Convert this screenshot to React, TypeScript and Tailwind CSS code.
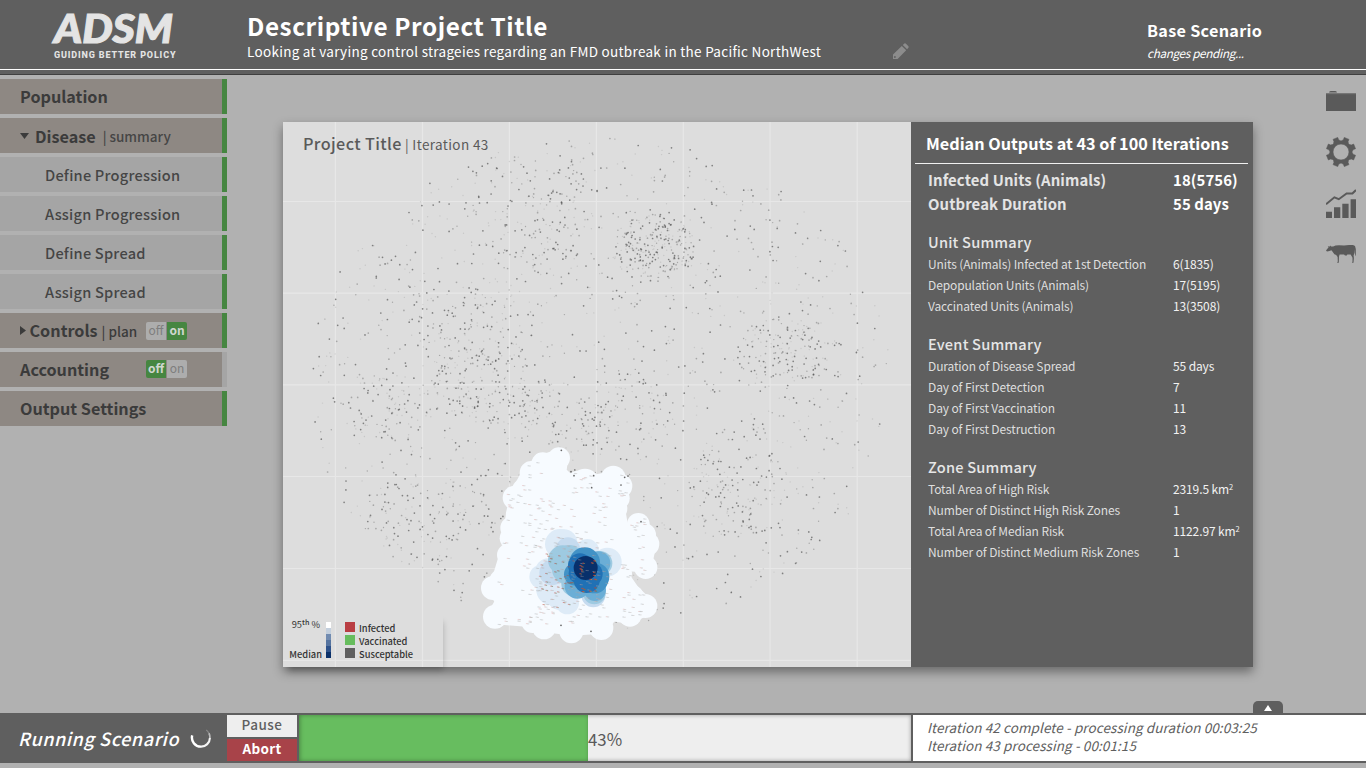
import React from "react";

function makeRandom(seed: number) {
  let s = seed;
  return () => {
    s = (s * 1664525 + 1013904223) % 4294967296;
    return s / 4294967296;
  };
}

type Dot = { x: number; y: number; r: number; o: number };

const CLUSTERS: [number, number, number, number, number][] = [
  [371, 126, 36, 30, 250],
  [500, 232, 40, 32, 140],
  [250, 85, 55, 60, 150],
  [190, 200, 60, 45, 120],
  [205, 265, 50, 32, 160],
  [105, 285, 42, 32, 90],
  [315, 290, 70, 38, 150],
  [455, 370, 45, 40, 120],
  [140, 400, 60, 40, 110],
];

function unitDots(): Dot[] {
  const rnd = makeRandom(4343);
  const out: Dot[] = [];
  const inside = (x: number, y: number) =>
    ((x - 317) / 292) ** 2 + ((y - 262) / 248) ** 2 < 1;
  const add = (x: number, y: number) => {
    const strong = rnd();
    out.push({
      x: Math.round(x * 10) / 10,
      y: Math.round(y * 10) / 10,
      r: strong > 0.45 ? 0.85 : 0.7,
      o: strong > 0.65 ? 0.7 : strong > 0.3 ? 0.4 : 0.16,
    });
  };
  let n = 0;
  while (n < 1400) {
    const x = 25 + rnd() * 584;
    const y = 14 + rnd() * 496;
    if (inside(x, y)) {
      add(x, y);
      n++;
    }
  }
  for (const [cx, cy, rx, ry, count] of CLUSTERS) {
    for (let i = 0; i < count; i++) {
      const a = rnd() * Math.PI * 2;
      const d = Math.pow(rnd(), 0.6) * 1.15;
      const x = cx + Math.cos(a) * d * rx;
      const y = cy + Math.sin(a) * d * ry;
      if (inside(x, y)) add(x, y);
    }
  }
  return out;
}

const DOTS = unitDots();

const ZONE: [number, number, number][] = [
  [267, 85, 33], [218, 101, 34], [184, 128, 35], [160, 180, 34], [134, 203, 36],
  [126, 294, 35], [115, 375, 34], [92, 452, 34], [69, 474, 36], [75, 560, 36],
  [135, 552, 34], [188, 575, 34], [222, 593, 35], [304, 604, 36], [394, 594, 36],
  [480, 555, 35], [526, 528, 36], [485, 500, 36], [450, 432, 36], [527, 412, 35],
  [532, 342, 36], [522, 315, 36], [505, 283, 34], [438, 236, 34], [450, 168, 37],
  [430, 144, 37], [345, 158, 42], [325, 160, 38], [445, 205, 34], [122, 325, 33],
];
const ZONE_CORE = "M267 85L218 101L184 128L150 190L135 250L130 294L140 350L115 375L92 452L80 474L104 515L80 556L188 565L230 580L304 590L394 584L420 545L480 555L526 528L485 490L445 432L465 396L520 400L532 342L505 305L450 305L438 236L450 168L430 150L380 160L300 165L262 130Z";

const RISK: [number, number, number, string][] = [
  [270, 342, 45, "#deebf7"], [282, 338, 40, "#deebf7"], [352, 362, 35, "#deebf7"],
  [412, 396, 43, "#deebf7"], [214, 440, 36, "#deebf7"], [245, 480, 46, "#deebf7"],
  [270, 500, 40, "#deebf7"], [292, 518, 35, "#deebf7"], [235, 425, 40, "#deebf7"],
  [294, 358, 36, "#c6dbef"], [246, 428, 38, "#c6dbef"], [370, 496, 36, "#c6dbef"],
  [278, 390, 44, "#9ecae1"], [298, 385, 40, "#9ecae1"], [290, 418, 44, "#9ecae1"],
  [390, 400, 37, "#9ecae1"], [373, 489, 34, "#9ecae1"], [310, 462, 36, "#9ecae1"],
  [322, 468, 38, "#6baed6"], [375, 480, 33, "#6baed6"], [385, 400, 36, "#6baed6"],
  [316, 433, 34, "#4292c6"], [344, 398, 46, "#4292c6"], [376, 440, 42, "#4292c6"],
  [374, 450, 40, "#4292c6"],
  [330, 406, 36, "#2171b5"], [350, 450, 39, "#2171b5"], [362, 432, 36, "#2171b5"],
  [328, 430, 32, "#2171b5"],
  [347, 414, 36, "#08306b"],
];

function RiskMap() {
  const rnd = makeRandom(77);
  const marks: React.ReactElement[] = [];
  let i = 0;
  while (marks.length < 280) {
    const x = 80 + rnd() * 440;
    const y = 95 + rnd() * 490;
    const k = rnd();
    i++;
    if (!ZONE.some(([cx, cy, r]) => (cx - x) ** 2 + (cy - y) ** 2 < (r * 0.9) ** 2) && !(x > 140 && x < 425 && y > 180 && y < 560)) continue;
    marks.push(
      <g key={i}>
        <rect x={x} y={y} width={5} height={3} fill={k > 0.6 ? "#e0a09e" : "#aab0b4"} opacity={0.42} />
        <rect x={x + 4} y={y + 1} width={6} height={2.5} fill="#a9a19a" opacity={0.42} />
      </g>,
    );
  }
  const hot: React.ReactElement[] = [];
  for (let j = 0; j < 58; j++) {
    const left = j < 38;
    const x = left ? 205 + rnd() * 105 : 328 + rnd() * 55;
    const y = left ? 370 + rnd() * 170 : 390 + rnd() * 105;
    hot.push(
      <g key={j}>
        <rect x={x} y={y} width={5} height={3} fill="#c8403a" opacity={left ? 0.5 : 0.9} />
        <rect x={x + 4} y={y + 1} width={4} height={3} fill={j % 3 ? "#6b7d55" : left ? "#a08a60" : "#d88a28"} opacity={left ? 0.6 : 0.8} />
      </g>,
    );
  }
  return (
    <svg className="block h-[545px] w-[628px]" viewBox="0 0 628 545">
      <rect width="628" height="545" fill="#dddddd" />
      <g stroke="#e7e7e7" strokeWidth="1.2">
        {[52.4, 139.5, 226.4, 313.4, 400.3, 487, 574.2].map((x) => (
          <path key={x} d={`M${x} 0V545`} />
        ))}
        {[79.5, 171.2, 262.8, 354.5, 446.5, 538.4].map((y) => (
          <path key={y} d={`M0 ${y}H628`} />
        ))}
      </g>
      <g fill="#585858">
        {DOTS.map((d, k) => (
          <circle key={k} cx={d.x} cy={d.y} r={d.r} opacity={d.o} />
        ))}
      </g>
      <g transform="translate(187 308) scale(0.33333)">
        <g fill="#f7fbff">
          <path d={ZONE_CORE} stroke="#f7fbff" strokeWidth="54" strokeLinejoin="round" />
          {ZONE.map(([x, y, r], k) => (
            <circle key={k} cx={x} cy={y} r={r} />
          ))}
        </g>
        {RISK.map(([x, y, r, c], k) => (
          <circle key={k} cx={x} cy={y} r={r} fill={c} />
        ))}
        {marks}
        {hot}
        <g fill="#666">
          {[[274, 61], [303, 125], [365, 173], [464, 142], [453, 165], [513, 275], [273, 586], [363, 604], [474, 138], [312, 137], [371, 137]].map(([x, y]) => (
            <circle key={`${x}-${y}`} cx={x} cy={y} r="2.6" />
          ))}
        </g>
      </g>
    </svg>
  );
}

function Toggle({ on }: { on: boolean }) {
  return (
    <div className="flex h-[18px] w-[41px] gap-px overflow-hidden rounded-[2px] text-[12px] leading-[16px]">
      <span className={on ? "w-5 bg-[#adadad] text-center font-normal text-[#7e7e7e]" : "w-5 bg-[#468641] text-center font-bold text-[#d0d6cf]"}>off</span>
      <span className={on ? "w-5 bg-[#468641] text-center font-bold text-[#d0d6cf]" : "w-5 bg-[#adadad] text-center font-normal text-[#7e7e7e]"}>on</span>
    </div>
  );
}

function NavRow({ children, sub, idle, plain }: { children: React.ReactNode; sub?: boolean; idle?: boolean; plain?: boolean }) {
  return (
    <div className="flex h-[35px]">
      <div
        className={
          sub
            ? "flex w-[222px] items-center bg-[#a5a5a5] pl-[45px] text-[14.6px] font-medium tracking-[0.22px] text-[#454545]"
            : plain
              ? "flex w-[222px] items-center bg-[#8e8883] pb-[2px] pl-5 text-[16.2px] font-bold text-[#3b3b3b]"
              : "flex w-[222px] items-center bg-[#8e8883] pl-5 text-[16.2px] font-bold text-[#3b3b3b]"
        }
      >
        {children}
      </div>
      <div className={idle ? "w-[5px] bg-[#a5a5a5]" : "w-[5px] bg-[#468641]"} />
    </div>
  );
}

function Row({ label, value }: { label: string; value: React.ReactNode }) {
  return (
    <div className="flex h-[21px] text-[12px] leading-[19px] tracking-[-0.12px]">
      <span className="w-[245px] text-[#dedede]">{label}</span>
      <span className="text-[#f2f2f2]">{value}</span>
    </div>
  );
}

function GroupTitle({ children }: { children: React.ReactNode }) {
  return <h3 className="mt-[18px] h-[21px] text-[14.6px] leading-[18px] font-medium tracking-[0.2px] text-[#e6e6e6]">{children}</h3>;
}

function Area({ km }: { km: string }) {
  return (
    <>
      {km} km<sup className="relative -top-[4px] align-baseline text-[7.5px] leading-none">2</sup>
    </>
  );
}

function Legend() {
  return (
    <div className="absolute bottom-0 left-0 flex h-[54px] w-[160px] text-[9.3px] text-[#333] shadow-[3px_6px_6px_-3px_rgba(0,0,0,0.22)]">
      <div className="flex w-[39px] flex-col justify-between pt-1 pb-[6px] text-right leading-[14px]">
        <span className="pr-[2px]">95<sup className="relative -top-[3px] align-baseline text-[7.2px] leading-none font-medium">th</sup> %</span>
        <span className="font-medium">Median</span>
      </div>
      <div className="mt-[9px] ml-1 flex h-9 w-[5px] flex-col">
        <i className="h-1.5 bg-white" />
        <i className="h-1.5 bg-[#c3cfdd]" />
        <i className="h-1.5 bg-[#718bb0]" />
        <i className="h-1.5 bg-[#55739f]" />
        <i className="h-1.5 bg-[#2e528a]" />
        <i className="h-1.5 bg-[#0a3069]" />
      </div>
      <div className="mt-[9px] ml-[14px] flex flex-col gap-[3px] font-medium">
        <div className="flex h-[10px] items-center"><i className="mr-1 size-[10px] bg-[#b93e43]" /><span className="pt-[2px] leading-[10px]">Infected</span></div>
        <div className="flex h-[10px] items-center"><i className="mr-1 size-[10px] bg-[#67bd5d]" /><span className="pt-[2px] leading-[10px]">Vaccinated</span></div>
        <div className="flex h-[10px] items-center"><i className="mr-1 size-[10px] bg-[#5f5f5f]" /><span className="pt-[2px] leading-[10px]">Susceptable</span></div>
      </div>
    </div>
  );
}

function gearPath() {
  const p: string[] = [];
  for (let i = 0; i < 8; i++) {
    const base = (i * 45 + 22.5) * (Math.PI / 180);
    const pts: [number, number][] = [[-0.33, 11.2], [-0.2, 12.6], [-0.17, 14.9], [0.17, 14.9], [0.2, 12.6], [0.33, 11.2]];
    for (const [da, r] of pts) {
      p.push(`${(15 + Math.cos(base + da) * r).toFixed(2)} ${(15 + Math.sin(base + da) * r).toFixed(2)}`);
    }
  }
  return `M${p.join("L")}Z M15 7a8 8 0 1 0 0 16a8 8 0 1 0 0-16Z`;
}

function SideIcons() {
  return (
    <nav className="flex w-[30px] flex-col text-[#5a5a5a]">
      <svg className="mt-4 h-5 w-[30px]" viewBox="0 0 30 20" fill="currentColor">
        <path d="M3 1.4Q3.5 0 5 0H9Q10.5 0 11 1.4Z" />
        <path d="M0 2.3H30V20H0Z" />
        <path d="M0 2.3H30V3.2H0Z" fill="#777" />
      </svg>
      <svg className="mt-[26px] size-[30px]" viewBox="0 0 30 30" fill="currentColor">
        <path d={gearPath()} fillRule="evenodd" stroke="currentColor" strokeWidth="0.6" strokeLinejoin="round" />
      </svg>
      <svg className="mt-[22px] h-[29px] w-[30px]" viewBox="0 0 30 29" fill="currentColor">
        <path d="M0 22.7H6V29H0ZM8 18.3H14.3V29H8ZM16.3 14.8H22.6V29H16.3ZM24.6 10.3H30V29H24.6Z" />
        <path d="M0 15.2L8.4 8.3L12.8 10.2L20.6 4.5H26.4L30 1" fill="none" stroke="currentColor" strokeWidth="2" />
      </svg>
      <svg className="mt-[26px] h-[20px] w-[30px]" viewBox="0 0 30 20" fill="currentColor">
        <path d="M0 6.4L2.6 3.2L1.8 2.2L3.8 2.5L4.5 1.6L5 2.6L7.2 2.4L9.5 1.6L13 1.2L18 1.4L23 1L27 1L29 2L29.8 5V11L29.3 12.2L28.9 9V5.3L28.5 9L27.6 11.4L27.9 14L27.5 18.7H25.9L26.5 17.5V13.8L25.5 12L24.6 10.4L21.3 10.6L20.8 11.4H19L18 10.5H13.6L13 12.5L12.8 18.7H11L11.8 17.4L11.6 13L10.2 11L8.4 10.2L6.6 7.8L5.4 6.3L3.4 7.1L1 7.4Z" />
      </svg>
    </nav>
  );
}

export default function App() {
  return (
    <div className="flex h-[768px] w-[1366px] flex-col overflow-hidden bg-[#b1b1b1] font-['Noto_Sans_CJK_SC',sans-serif]">
      <header className="h-[75px] border-b border-[#404040] bg-[#5f5f5f]">
        <div className="flex h-[70px] border-b border-white">
          <div className="w-[247px] pl-[46px]">
            <svg className="h-[66px] w-[138px] overflow-visible" viewBox="46 0 138 66" fill="#e4e4e4">
              <text x="54" y="42.7" fontFamily="Lato" fontWeight="900" fontStyle="italic" fontSize="39" stroke="#e4e4e4" strokeWidth="1.1" textLength="119" lengthAdjust="spacingAndGlyphs">ADSM</text>
              <text x="54" y="58" fontFamily="Roboto" fontWeight="800" fontSize="9" textLength="121.5">GUIDING BETTER POLICY</text>
            </svg>
          </div>
          <div className="w-[646px] pt-2 text-white">
            <h1 className="text-[24.3px] leading-[35px] font-bold tracking-[0.58px] whitespace-nowrap">Descriptive Project Title</h1>
            <p className="text-[13.5px] leading-4 tracking-[0.29px] whitespace-nowrap">Looking at varying control strageies regarding an FMD outbreak in the Pacific NorthWest</p>
          </div>
          <svg className="mt-[43px] size-4" viewBox="0 0 16 16" fill="#8c8c8c">
            <path d="M0 16V11.4L8.8 2.9L13.2 7.2L4.6 16Z M9.8 2L11.4 0.5Q12 0 12.7 0.6L15.4 3.3Q16 4 15.4 4.7L14.1 6.2Z" />
            <circle cx="1.9" cy="14" r="0.9" fill="#5f5f5f" />
          </svg>
          <div className="ml-[238px] pt-[18px] text-white">
            <h2 className="text-[16.2px] leading-6 font-bold tracking-[0.3px] whitespace-nowrap">Base Scenario</h2>
            <p className="pt-[2px] text-[11.7px] leading-[18px] tracking-[-0.32px] italic">changes pending...</p>
          </div>
        </div>
      </header>

      <main className="flex h-[638px]">
        <aside className="flex w-[227px] flex-col gap-1 pt-1 leading-[20px] whitespace-nowrap">
          <NavRow plain>Population</NavRow>
          <NavRow>
            <svg className="mr-[6px] h-[6px] w-[9px]" viewBox="0 0 9 6" fill="#3b3b3b"><path d="M0 0H9L4.5 6Z" /></svg>
            Disease<span className="ml-[7px] text-[13.5px] font-medium text-[#454545]">| summary</span>
          </NavRow>
          <NavRow sub>Define Progression</NavRow>
          <NavRow sub>Assign Progression</NavRow>
          <NavRow sub>Define Spread</NavRow>
          <NavRow sub>Assign Spread</NavRow>
          <NavRow>
            <svg className="mr-[3.5px] h-[9px] w-[6px]" viewBox="0 0 6 9" fill="#3b3b3b"><path d="M0 0V9L6 4.5Z" /></svg>
            <span className="w-[116.5px]">Controls<span className="ml-1 text-[13.5px] font-medium">| plan</span></span>
            <Toggle on />
          </NavRow>
          <NavRow idle plain><span className="w-[126px]">Accounting</span><Toggle on={false} /></NavRow>
          <NavRow plain>Output Settings</NavRow>
        </aside>

        <section className="mt-[47px] ml-14 flex h-[545px] w-[970px] shadow-[0_5px_10px_rgba(0,0,0,0.4)]">
          <div className="relative w-[628px]">
            <RiskMap />
            <div className="absolute top-[9px] left-5 text-[16.2px] leading-6 font-medium tracking-[0.38px] whitespace-nowrap text-[#5a5a5a]">
              Project Title <span className="-ml-[1px] text-[13.5px] font-normal">| Iteration 43</span>
            </div>
            <Legend />
          </div>
          <div className="w-[342px] bg-[#5f5f5f]">
            <h2 className="mx-1 mr-[5px] h-[42px] border-b border-[#f0f0f0] pt-[9px] pl-[11px] text-[16.2px] leading-6 font-bold whitespace-nowrap text-white">Median Outputs at 43 of 100 Iterations</h2>
            <div className="pt-[3px] pl-[17px] whitespace-nowrap">
              <div className="flex h-6 text-[14.9px] leading-[25px] font-bold tracking-[0.1px]"><span className="w-[245px] text-[#e4e4e4]">Infected Units (Animals)</span><span className="text-white">18(5756)</span></div>
              <div className="flex h-6 text-[14.9px] leading-[25px] font-bold tracking-[0.1px]"><span className="w-[245px] text-[#e4e4e4]">Outbreak Duration</span><span className="text-white">55 days</span></div>
              <GroupTitle>Unit Summary</GroupTitle>
              <Row label="Units (Animals) Infected at 1st Detection" value="6(1835)" />
              <Row label="Depopulation Units (Animals)" value="17(5195)" />
              <Row label="Vaccinated Units (Animals)" value="13(3508)" />
              <GroupTitle>Event Summary</GroupTitle>
              <Row label="Duration of Disease Spread" value="55 days" />
              <Row label="Day of First Detection" value="7" />
              <Row label="Day of First Vaccination" value="11" />
              <Row label="Day of First Destruction" value="13" />
              <GroupTitle>Zone Summary</GroupTitle>
              <Row label="Total Area of High Risk" value={<Area km="2319.5" />} />
              <Row label="Number of Distinct High Risk Zones" value="1" />
              <Row label="Total Area of Median Risk" value={<Area km="1122.97" />} />
              <Row label="Number of Distinct Medium Risk Zones" value="1" />
            </div>
          </div>
        </section>
        <div className="ml-[73px]"><SideIcons /></div>
      </main>

      <footer className="relative flex h-[50px] gap-0.5 bg-[#5f5f5f] py-0.5">
        <div className="absolute -top-3 left-[1253px] flex h-3 w-[30px] items-center justify-center rounded-t-[5px] bg-[#5f5f5f]">
          <svg className="mt-[2px] h-[6px] w-2" viewBox="0 0 8 6" fill="#fff"><path d="M0 6H8L4 0Z" /></svg>
        </div>
        <div className="flex w-[225px] items-center pl-[18px] text-[18px] font-medium tracking-[0.6px] whitespace-nowrap text-white italic">
          <span className="w-[172px]">Running Scenario</span>
          <svg className="size-[22px]" viewBox="0 0 22 22" fill="none">
            <path d="M2.2 8.4A9 9 0 0 0 11 19.6" stroke="#fff" strokeWidth="2.4" />
            <path d="M11 19.6A8.8 8.8 0 0 0 19.9 11" stroke="#f4f4f4" strokeWidth="2.1" />
            <path d="M19.9 11A9 9 0 0 0 18.9 6.2" stroke="#bbb" strokeWidth="1.8" />
            <path d="M18.9 6.2A9 9 0 0 0 16.2 3" stroke="#888" strokeWidth="1.2" />
          </svg>
        </div>
        <div className="flex w-[70px] flex-col gap-0.5 text-center text-[13.5px]">
          <button className="flex h-[22px] justify-center bg-[#eee] leading-[18px] font-medium tracking-[0.5px] text-[#5f5f5f]">Pause</button>
          <button className="flex h-[22px] justify-center bg-[#a84349] leading-[18px] font-bold tracking-[0.3px] text-white">Abort</button>
        </div>
        <div className="flex w-[612px] bg-[#eee] shadow-[inset_0_0_4px_rgba(0,0,0,0.35)]">
          <div className="w-[289px] bg-[#67bd5f] shadow-[inset_1px_0_4px_rgba(0,0,0,0.3)]" />
          <span className="pt-3 text-[16.8px] leading-6 text-[#5a5a5a]">43%</span>
        </div>
        <div className="flex-1 bg-white pt-[3px] pl-[14px] text-[13.5px] leading-[18px] tracking-[0.09px] whitespace-nowrap text-[#5f5f5f] italic">
          <p>Iteration 42 complete - processing duration 00:03:25</p>
          <p>Iteration 43 processing - 00:01:15</p>
        </div>
      </footer>
    </div>
  );
}
